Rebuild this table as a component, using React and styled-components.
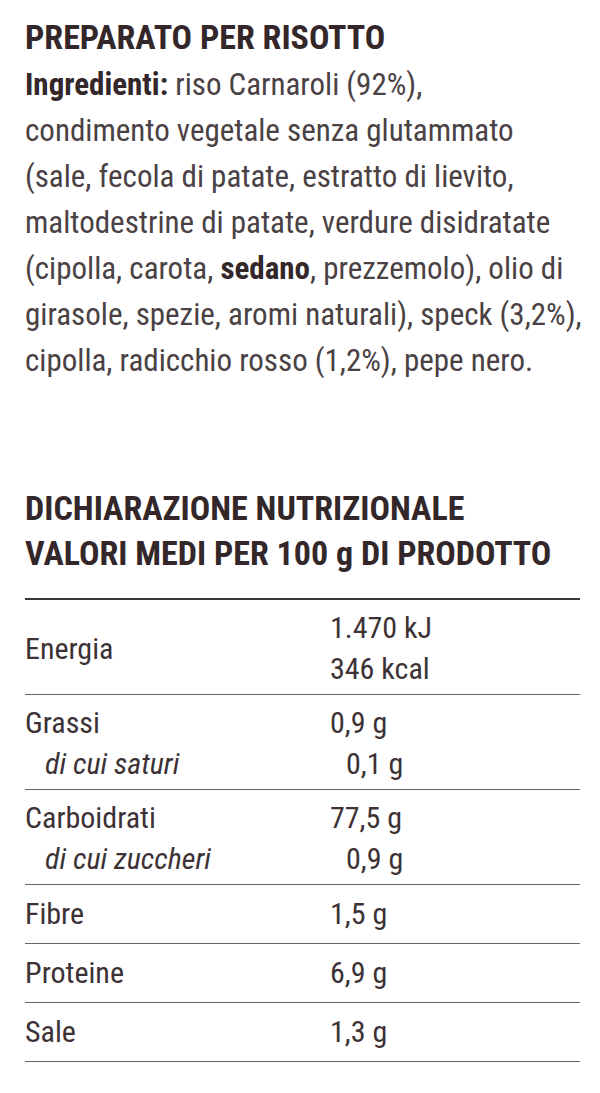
import React from "react";
import styled, { createGlobalStyle } from "styled-components";

const GlobalStyle = createGlobalStyle`
  body {
    margin: 0;
    background: #ffffff;
  }
`;

const Page = styled.div`
  width: 555px;
  padding: 20px 25px 30px;
  font-family: "Roboto Condensed", Roboto, sans-serif;
  color: #3a2f32;
`;

const Title = styled.h1`
  margin: 0;
  font-size: 34px;
  line-height: 34px;
  font-weight: 700;
  color: #33272a;
`;

const Ingredients = styled.p`
  margin: 8px 0 0;
  font-size: 31px;
  line-height: 46px;
  font-weight: 400;
  white-space: nowrap;
  color: #4a4144;

  b {
    font-weight: 700;
    color: #33272a;
  }
`;

const Heading = styled.h2`
  margin: 102px 0 0;
  font-size: 34px;
  line-height: 45px;
  font-weight: 700;
  white-space: nowrap;
  color: #33272a;
`;

const Table = styled.div`
  margin-top: 22px;
  border-top: 2px solid #3d3537;
`;

const Row = styled.div`
  display: grid;
  grid-template-columns: 305px 1fr;
  align-items: center;
  padding: ${p => (p.$double ? "7px 0 5px" : "8px 0 9px")};
  border-bottom: 1px solid #6a6365;
  font-size: 30px;
  line-height: 41px;
  color: #3c3235;
`;

const Cell = styled.div`
  display: flex;
  flex-direction: column;
`;

const Label = styled.span`
  padding-left: ${p => (p.$sub ? "20px" : "0")};
  font-style: ${p => (p.$sub ? "italic" : "normal")};
`;

const Value = styled.span`
  padding-left: ${p => (p.$sub ? "16px" : "0")};
`;

const rows = [
  { labels: [["Grassi"], ["di cui saturi", true]], values: [["0,9 g"], ["0,1 g", true]] },
  { labels: [["Carboidrati"], ["di cui zuccheri", true]], values: [["77,5 g"], ["0,9 g", true]] },
  { labels: [["Fibre"]], values: [["1,5 g"]] },
  { labels: [["Proteine"]], values: [["6,9 g"]] },
  { labels: [["Sale"]], values: [["1,3 g"]] },
];

const App = () => {
  return (
    <>
      <GlobalStyle />
      <Page>
        <Title>PREPARATO PER RISOTTO</Title>
        <Ingredients>
          <b>Ingredienti:</b> riso Carnaroli (92%),<br />
          condimento vegetale senza glutammato<br />
          (sale, fecola di patate, estratto di lievito,<br />
          maltodestrine di patate, verdure disidratate<br />
          (cipolla, carota, <b>sedano</b>, prezzemolo), olio di<br />
          girasole, spezie, aromi naturali), speck (3,2%),<br />
          cipolla, radicchio rosso (1,2%), pepe nero.
        </Ingredients>

        <Heading>
          DICHIARAZIONE NUTRIZIONALE<br />
          VALORI MEDI PER 100 g DI PRODOTTO
        </Heading>

        <Table>
          <Row $double>
            <Cell>
              <Label>Energia</Label>
            </Cell>
            <Cell>
              <Value>1.470 kJ</Value>
              <Value>346 kcal</Value>
            </Cell>
          </Row>
          {rows.map(row => (
            <Row key={row.labels[0][0]} $double={row.labels.length > 1}>
              <Cell>
                {row.labels.map(([text, sub]) => (
                  <Label key={text} $sub={sub}>{text}</Label>
                ))}
              </Cell>
              <Cell>
                {row.values.map(([text, sub]) => (
                  <Value key={text} $sub={sub}>{text}</Value>
                ))}
              </Cell>
            </Row>
          ))}
        </Table>
      </Page>
    </>
  );
};

export default App;
